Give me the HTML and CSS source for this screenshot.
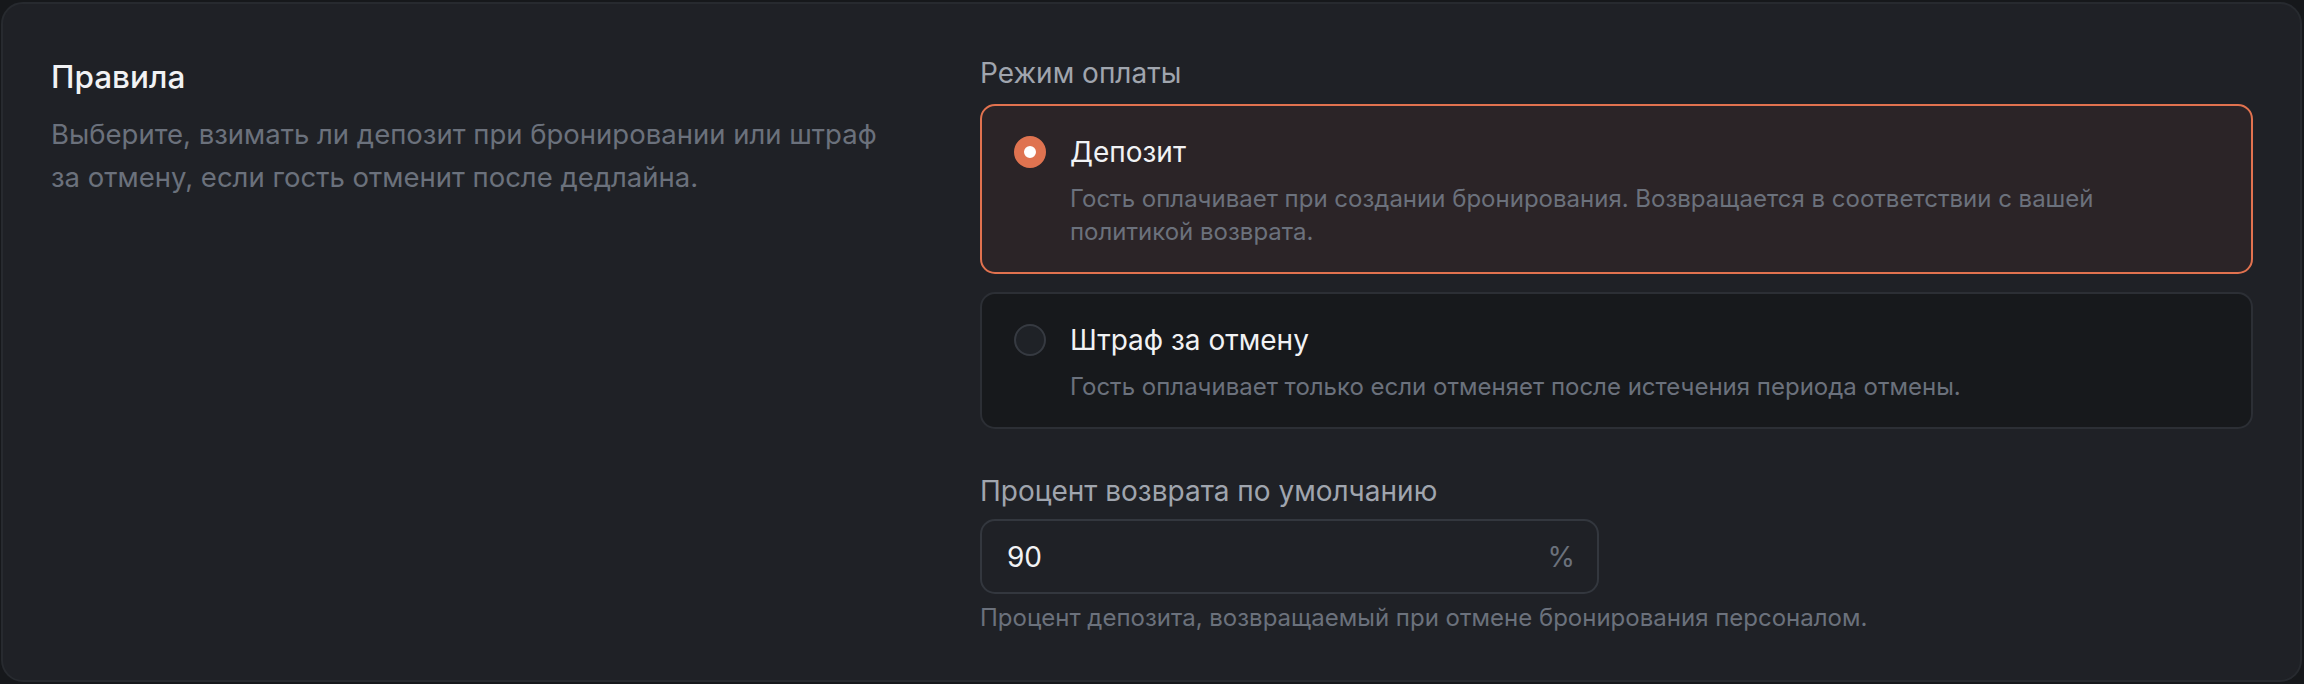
FILE: index.html
```html
<!DOCTYPE html>
<html lang="ru">
<head>
    <meta charset="UTF-8">
    <meta name="viewport" content="width=device-width, initial-scale=1.0">
    <title>Правила оплаты</title>
    <link rel="stylesheet" href="styles.css">
</head>
<body>
    <section class="panel">
        <!-- левая колонка: заголовок и пояснение -->
        <div class="panel-intro">
            <h2 class="panel-title">Правила</h2>
            <p class="panel-text">Выберите, взимать ли депозит при бронировании или штраф за отмену, если гость отменит после дедлайна.</p>
        </div>

        <!-- правая колонка: сами настройки -->
        <div class="panel-form">
            <div class="field-label">Режим оплаты</div>
            <div class="options">
                <label class="option is-selected">
                    <span class="radio"></span>
                    <span class="option-body">
                        <span class="option-title">Депозит</span>
                        <span class="option-text">Гость оплачивает при создании бронирования. Возвращается в соответствии с вашей политикой возврата.</span>
                    </span>
                </label>
                <label class="option">
                    <span class="radio"></span>
                    <span class="option-body">
                        <span class="option-title">Штраф за отмену</span>
                        <span class="option-text">Гость оплачивает только если отменяет после истечения периода отмены.</span>
                    </span>
                </label>
            </div>

            <div class="field-label field-label-gap">Процент возврата по умолчанию</div>
            <div class="input-box">
                <span class="input-value">90</span>
                <span class="input-suffix">%</span>
            </div>
            <p class="field-hint">Процент депозита, возвращаемый при отмене бронирования персоналом.</p>
        </div>
    </section>
</body>
</html>
```

FILE: styles.css
```css
html,body{
    height: 100%;
}
body{
    margin: 0;
    padding: 2px 2px 2px 1px;
    box-sizing: border-box;
    background-color: #16181b;
    font-family: Inter, "Noto Sans", sans-serif;
}
.panel{
    box-sizing: border-box;
    height: 100%;
    display: grid;
    /* левая колонка уже правой */
    grid-template-columns: 849px 1fr;
    column-gap: 80px;
    padding: 49px 47px 46px 48px;
    background-color: #1f2126;
    border: 2px solid #272a2f;
    border-radius: 22px;
}
.panel-intro{
    padding-top: 3px;
}
.panel-title{
    margin: 0;
    font-size: 31.5px;
    line-height: 42px;
    font-weight: 500;
    color: #f1f2f4;
}
.panel-text{
    margin: 15px 0 0;
    font-size: 27.5px;
    line-height: 43px;
    color: #6b717c;
}
.field-label{
    font-size: 28px;
    line-height: 40px;
    color: #a0a5ae;
    margin-bottom: 11px;
}
.field-label-gap{
    margin-top: 42px;
    margin-bottom: 8px;
}
.options{
    display: flex;
    flex-direction: column;
    gap: 18px;
}
.option{
    display: flex;
    gap: 24px;
    padding: 26px 32px 24px;
    border: 2px solid #2c2f35;
    border-radius: 15px;
    background-color: #17191c;
}
.option.is-selected{
    border-color: #e1724f;
    background-color: #2b2427;
}
.radio{
    flex: none;
    box-sizing: border-box;
    width: 32px;
    height: 32px;
    margin-top: 4px;
    border-radius: 50%;
    border: 2px solid #363a41;
    background-color: #1f2227;
}
.is-selected .radio{
    border: 10px solid #df7350;
    background-color: #ffffff;
}
.option-body{
    display: flex;
    flex-direction: column;
    gap: 10px;
}
.option-title{
    font-size: 28px;
    line-height: 40px;
    font-weight: 400;
    color: #f1f2f4;
}
.option-text{
    font-size: 24px;
    line-height: 33px;
    color: #6b717c;
}
.input-box{
    box-sizing: border-box;
    width: 619px;
    height: 75px;
    display: flex;
    align-items: center;
    justify-content: space-between;
    padding: 0 22px 0 25px;
    border: 2px solid #33373e;
    border-radius: 15px;
    background-color: #1f2126;
}
.input-value{
    font-size: 28px;
    color: #f1f2f4;
}
.input-suffix{
    font-size: 28px;
    color: #6b717c;
}
.field-hint{
    margin: 8px 0 0;
    font-size: 24px;
    line-height: 32px;
    color: #6b717c;
}
```
